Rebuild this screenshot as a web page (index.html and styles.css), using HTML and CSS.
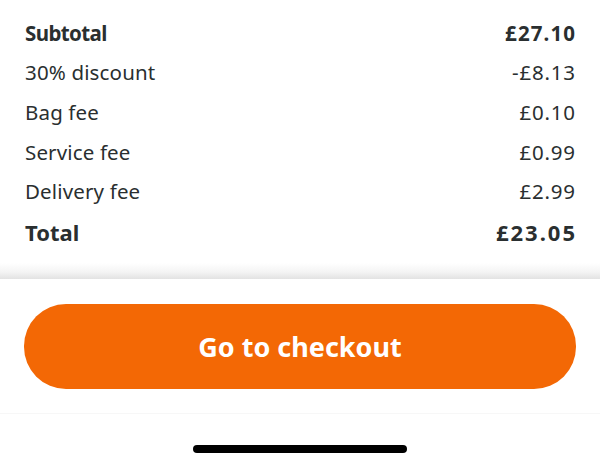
FILE: index.html
```html
<!DOCTYPE html>
<html>
<head>
<meta charset="utf-8">
<link rel="stylesheet" href="styles.css">
</head>
<body>
<div class="page">
  <div class="summary">
    <div class="row strong"><span class="label">Subtotal</span><span class="amount">£27.10</span></div>
    <div class="row"><span class="label">30% discount</span><span class="amount">-£8.13</span></div>
    <div class="row"><span class="label">Bag fee</span><span class="amount">£0.10</span></div>
    <div class="row"><span class="label">Service fee</span><span class="amount">£0.99</span></div>
    <div class="row"><span class="label">Delivery fee</span><span class="amount">£2.99</span></div>
    <div class="row total"><span class="label">Total</span><span class="amount">£23.05</span></div>
  </div>
  <div class="shade"></div>
  <div class="footer">
    <button class="checkout">Go to checkout</button>
    <div class="divider"></div>
    <div class="home-bar"></div>
  </div>
</div>
</body>
</html>
```
FILE: styles.css
```css
html, body {
  margin: 0;
  padding: 0;
  background: #ffffff;
}
.page {
  width: 600px;
  height: 465px;
  overflow: hidden;
  font-family: "Noto Sans", "Open Sans", sans-serif;
  color: #2a2f30;
  display: flex;
  flex-direction: column;
}
.summary {
  padding: 13px 25px 0 25px;
  display: flex;
  flex-direction: column;
}
.row {
  height: 39.6px;
  display: flex;
  justify-content: space-between;
  align-items: center;
  font-size: 20.5px;
}
.row .label {
  letter-spacing: 0.15px;
}
.row .amount {
  letter-spacing: 0.8px;
  margin-right: -0.8px;
}
.row.strong {
  font-weight: 700;
}
.row.strong .label {
  letter-spacing: -0.6px;
}
.row.strong .amount {
  letter-spacing: 1.1px;
  margin-right: -1.1px;
}
.row.total {
  height: 42px;
  font-size: 22px;
  font-weight: 700;
}
.row.total .label {
  letter-spacing: 0;
}
.row.total .amount {
  letter-spacing: 2px;
  margin-right: -2px;
}
.shade {
  margin-top: 10px;
  height: 16px;
  background: linear-gradient(to bottom, #ffffff 0%, #f4f4f4 55%, #e2e2e2 100%);
}
.footer {
  flex: 1;
  display: flex;
  flex-direction: column;
  align-items: center;
  padding-top: 25px;
}
.checkout {
  width: 552px;
  height: 85px;
  border: none;
  border-radius: 42px;
  background: #f36805;
  color: #ffffff;
  font-family: "Noto Sans", "Open Sans", sans-serif;
  font-weight: 700;
  font-size: 27px;
  padding: 0;
}
.divider {
  margin-top: 24px;
  width: 100%;
  height: 1px;
  background: #f7f7f7;
}
.home-bar {
  margin-top: 31px;
  width: 214px;
  height: 8px;
  border-radius: 4px;
  background: #000000;
}
```
